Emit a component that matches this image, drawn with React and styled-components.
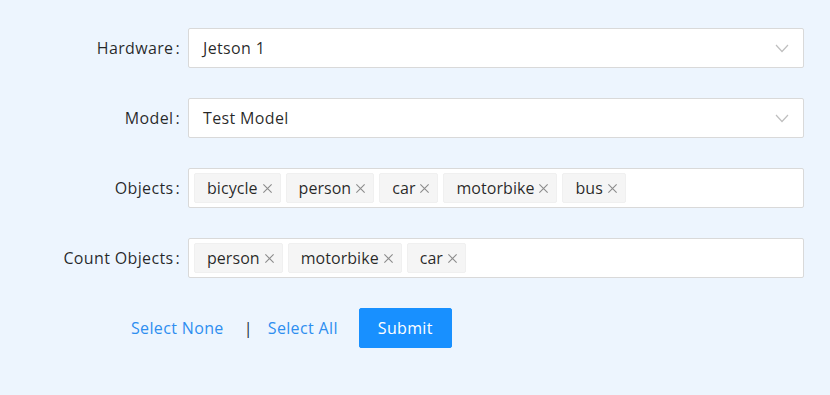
import { createGlobalStyle, styled } from 'styled-components';

const GlobalStyle = createGlobalStyle`
    html, body {
        margin: 0;
        background: #edf5fe;
    }
    body {
        font-family: 'Open Sans', 'Noto Sans CJK SC', sans-serif;
        font-size: 16px;
        letter-spacing: 0.35px;
        color: rgba(0, 0, 0, 0.85);
    }
`;

const Page = styled.div`
    width: 830px;
    height: 395px;
    padding-top: 28px;
    box-sizing: border-box;
`;

const Row = styled.div`
    display: grid;
    grid-template-columns: 188px 616px;
    align-items: center;
    margin-bottom: 30px;
`;

const Label = styled.label`
    text-align: right;
    white-space: nowrap;
    line-height: 40px;
    &::after {
        content: ':';
        margin: 0 8px 0 2px;
    }
`;

const Box = styled.div`
    height: 40px;
    box-sizing: border-box;
    border: 1px solid #d9d9d9;
    border-radius: 2px;
    background: #fff;
    display: flex;
    align-items: center;
`;

const SelectBox = styled(Box)`
    padding: 0 14px 0 14px;
    justify-content: space-between;
`;

const TagBox = styled(Box)`
    padding: 0 5px;
    gap: 5px;
`;

const Tag = styled.span`
    display: inline-flex;
    align-items: center;
    height: 30px;
    box-sizing: border-box;
    padding: 0 7px 0 12px;
    background: #f5f5f5;
    border: 1px solid #f0f0f0;
    border-radius: 2px;
    gap: 4px;
    letter-spacing: 0.05px;
`;

const Close = styled.svg`
    width: 11px;
    height: 11px;
    stroke: #8c8c8c;
    stroke-width: 1.2;
`;

const Arrow = styled.svg`
    width: 14px;
    height: 14px;
    fill: none;
    stroke: #bfbfbf;
    stroke-width: 1.2;
`;

const Actions = styled.div`
    display: flex;
    align-items: center;
    padding-left: 116px;
`;

const LinkButton = styled.button`
    font: inherit;
    letter-spacing: inherit;
    background: none;
    border: none;
    padding: 0 15px;
    height: 40px;
    color: #2e8ef0;
    cursor: pointer;
`;

const Divider = styled.span`
    color: #1f2d3d;
    margin: 0 0 0 5px;
`;

const Submit = styled.button`
    font: inherit;
    letter-spacing: inherit;
    height: 40px;
    padding: 0 18px;
    margin-left: 6px;
    border: 1px solid #1890ff;
    border-radius: 2px;
    background: #1890ff;
    color: #fff;
    cursor: pointer;
`;

function TagItem({ children }) {
    return (
        <Tag>
            {children}
            <Close viewBox="0 0 12 12">
                <path d="M1.5 1.5 L10.5 10.5 M10.5 1.5 L1.5 10.5" />
            </Close>
        </Tag>
    );
}

function SelectField({ label, value }) {
    return (
        <Row>
            <Label>{label}</Label>
            <SelectBox>
                <span>{value}</span>
                <Arrow viewBox="0 0 14 14">
                    <path d="M1 4 L7 10.5 L13 4" />
                </Arrow>
            </SelectBox>
        </Row>
    );
}

function TagField({ label, items }) {
    return (
        <Row>
            <Label>{label}</Label>
            <TagBox>
                {items.map((item) => (
                    <TagItem key={item}>{item}</TagItem>
                ))}
            </TagBox>
        </Row>
    );
}

export default function App() {
    return (
        <Page>
            <GlobalStyle />
            <SelectField label="Hardware" value="Jetson 1" />
            <SelectField label="Model" value="Test Model" />
            <TagField label="Objects" items={['bicycle', 'person', 'car', 'motorbike', 'bus']} />
            <TagField label="Count Objects" items={['person', 'motorbike', 'car']} />
            <Actions>
                <LinkButton>Select None</LinkButton>
                <Divider>|</Divider>
                <LinkButton>Select All</LinkButton>
                <Submit>Submit</Submit>
            </Actions>
        </Page>
    );
}
